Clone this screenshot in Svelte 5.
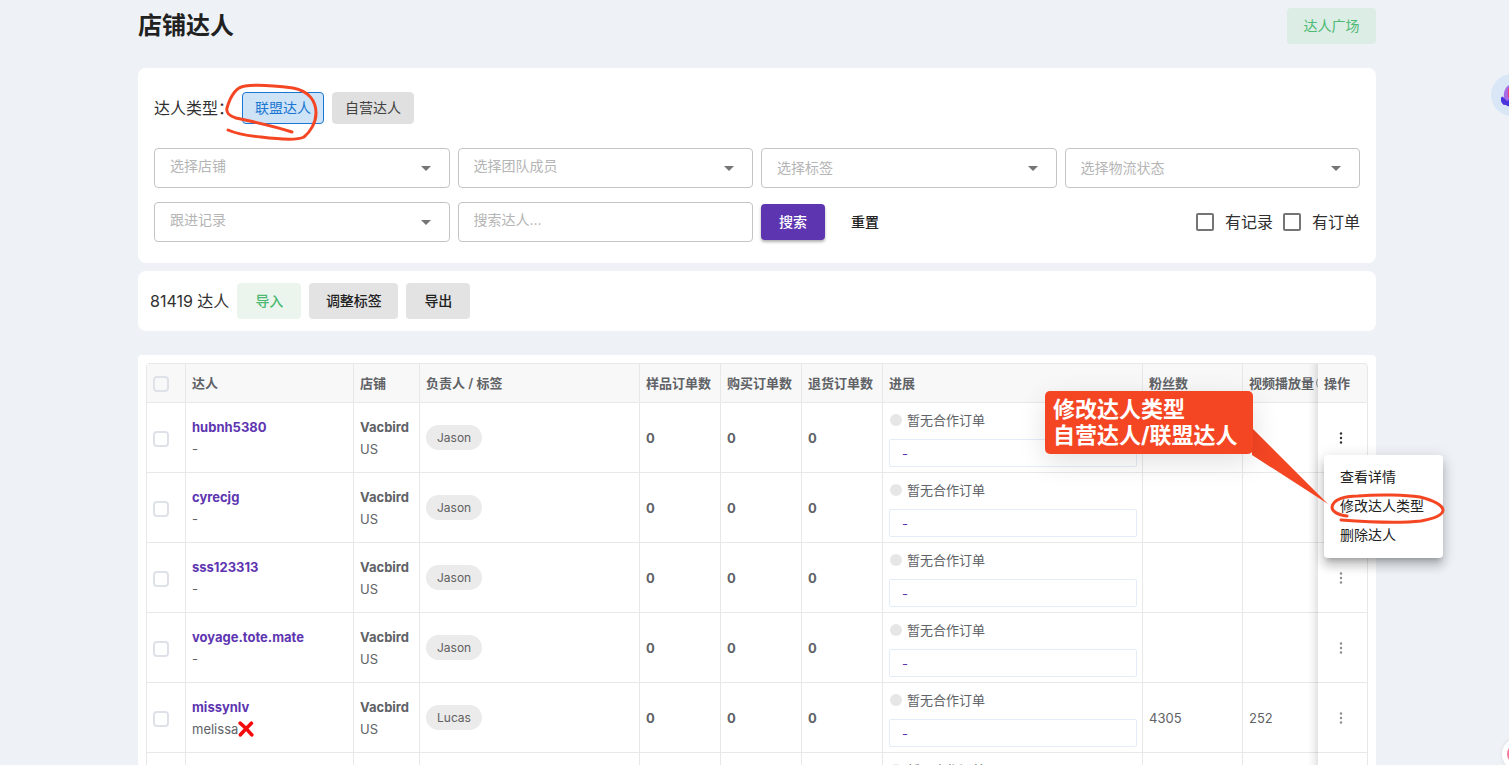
<script>
  const filters = [
    { id: 'shop', label: '选择店铺', raised: true },
    { id: 'member', label: '选择团队成员', raised: true },
    { id: 'tag', label: '选择标签', raised: false },
    { id: 'logistics', label: '选择物流状态', raised: false },
    { id: 'follow', label: '跟进记录', raised: true }
  ];

  const rows = [
    { name: 'hubnh5380', nick: '-', owner: 'Jason', fans: '', views: '', active: true },
    { name: 'cyrecjg', nick: '-', owner: 'Jason', fans: '', views: '' },
    { name: 'sss123313', nick: '-', owner: 'Jason', fans: '', views: '' },
    { name: 'voyage.tote.mate', nick: '-', owner: 'Jason', fans: '', views: '' },
    { name: 'missynlv', nick: 'melissa', cross: true, owner: 'Lucas', fans: '4305', views: '252' },
    { name: '-', nick: '-', owner: '-', fans: '', views: '' }
  ];
</script>

<div class="page">
  <main>
    <header>
      <h1>店铺达人</h1>
      <button class="btn green plaza">达人广场</button>
    </header>

    <section class="card filters">
      <div class="types">
        <span class="types-label">达人类型：</span>
        <button class="type selected">联盟达人</button>
        <button class="type">自营达人</button>
      </div>
      <div class="grid">
        {#each filters as f (f.id)}
          <div class="field">
            <select id={f.id} class:raised={f.raised} aria-label={f.label}>
              <option>{f.label}</option>
            </select>
            <svg class="arrow" viewBox="0 0 10 5" aria-hidden="true"><path d="M0 0h10L5 5z" fill="#757575" /></svg>
          </div>
        {/each}
        <input class="raised" type="text" placeholder="搜索达人..." aria-label="搜索达人" />
        <div class="actions">
          <button class="btn primary">搜索</button>
          <button class="btn plain">重置</button>
          <label class="check first"><input type="checkbox" />有记录</label>
          <label class="check"><input type="checkbox" />有订单</label>
        </div>
      </div>
    </section>

    <section class="card toolbar">
      <span class="total">81419 达人</span>
      <button class="btn green">导入</button>
      <button class="btn grey wide">调整标签</button>
      <button class="btn grey">导出</button>
    </section>

    <section class="card list">
      <table>
        <colgroup>
          <col class="c-check" /><col class="c-name" /><col class="c-shop" /><col />
          <col class="c-num" /><col class="c-num" /><col class="c-num" />
          <col class="c-progress" /><col class="c-fans" /><col class="c-views" /><col class="c-ops" />
        </colgroup>
        <thead>
          <tr>
            <th><input class="tick" type="checkbox" aria-label="全选" /></th>
            <th>达人</th>
            <th>店铺</th>
            <th>负责人 / 标签</th>
            <th>样品订单数</th>
            <th>购买订单数</th>
            <th>退货订单数</th>
            <th>进展</th>
            <th>粉丝数</th>
            <th class="views"><span class="clip">视频播放量<i class="hint"></i></span></th>
            <th class="ops">操作</th>
          </tr>
        </thead>
        <tbody>
          {#each rows as r (r.name)}
            <tr>
              <td><input class="tick" type="checkbox" aria-label={r.name} /></td>
              <td>
                <a href="#{r.name}">{r.name}</a>
                <div class="nick">{r.nick}{#if r.cross}<svg viewBox="0 0 16 16" role="img" aria-label="❌"><path d="M2.2 2.2Q8 7 13.8 13.8M13.4 2.2Q8 7.5 2.4 13.8" fill="none" stroke="#f40b0b" stroke-width="3.6" stroke-linecap="round" /></svg>{/if}</div>
              </td>
              <td><b>Vacbird</b><div>US</div></td>
              <td><span class="chip">{r.owner}</span></td>
              <td><b>0</b></td>
              <td><b>0</b></td>
              <td><b>0</b></td>
              <td class="progress">
                <div class="status"><i class="dot"></i>暂无合作订单</div>
                <div class="note">-</div>
              </td>
              <td>{r.fans}</td>
              <td class="views">{r.views}</td>
              <td class="ops">
                <button class="more" class:active={r.active} aria-label="更多操作">
                  <svg viewBox="0 0 4 14"><circle cx="2" cy="2.5" r="1.2" /><circle cx="2" cy="7" r="1.2" /><circle cx="2" cy="11.5" r="1.2" /></svg>
                </button>
              </td>
            </tr>
          {/each}
        </tbody>
      </table>
    </section>
  </main>

  <div class="menu" role="menu">
    <button role="menuitem">查看详情</button>
    <button role="menuitem">修改达人类型</button>
    <button role="menuitem">删除达人</button>
  </div>

  <!-- Hand-drawn loop around the selected creator type -->
  <svg class="loop-type" viewBox="0 0 100 64" aria-hidden="true">
    <path d="M69 52C51 46 32 42 13 38C6 36 3 32 4 28C8 14 14 7 22 6C34 4 55 6 70 8C86 11 93 21 93 33C93 43 87 52 81 57C73 61 54 59 38 57C26 56 14 54 5 50" />
  </svg>

  <!-- Callout tail pointing at the menu entry -->
  <svg class="tail" viewBox="0 0 80 80" aria-hidden="true">
    <path d="M2 4L78 80L2 31Z" fill="#f54624" />
  </svg>
  <div class="callout">修改达人类型<br />自营达人/联盟达人</div>

  <svg class="loop-menu" viewBox="0 0 118 34" aria-hidden="true">
    <path d="M19 23C9 22 4 18 4 14C5 7 15 3 30 3C52 1 78 2 92 4C104 7 114 11 115 17C115 23 104 26 93 28C75 30 40 29 13 27" />
  </svg>

  <div class="assistant">
    <svg viewBox="0 0 25 42" aria-hidden="true">
      <path d="M13 24C12 17 15 11 21 10V30L12 31Z" fill="#a76be6" />
      <path d="M17 15Q19 12 21 15V25L17 23Z" fill="#f23c6a" />
      <path d="M10 24Q11 21 13 24L16 27L21 24V30Q18 34 15 31Q11 31 10 27Z" fill="#4a35dc" />
    </svg>
  </div>
  <div class="helper"><i></i></div>
</div>

<style>
  :global(body) { background: #eef2f7; }
  .page {
    position: relative;
    overflow: hidden auto;
    scrollbar-width: none;
    height: 100vh;
    font-family: Inter, "Noto Sans CJK SC", sans-serif;
    font-size: 13px;
    line-height: 22px;
    color: #606266;
  }
  .page :is(button, input, select) { font-family: inherit; box-sizing: border-box; margin: 0; }
  main { padding: 8px 133px 0 138px; }
  header { display: flex; justify-content: space-between; align-items: center; height: 36px; margin-bottom: 24px; }
  h1 { margin: 0; font-size: 24px; line-height: 36px; font-weight: 600; color: #212121; }
  .card { background: #fff; border-radius: 8px; }
  .btn {
    height: 36px;
    min-width: 64px;
    padding: 0 16px 2px;
    border: 0;
    border-radius: 4px;
    font-size: 14px;
    font-weight: 500;
    color: #212121;
  }
  .green { background: #ebf5ee; color: #4db972; }
  .plaza { background: #dcede6; min-width: 89px; font-weight: 400; }
  .grey { background: #e3e3e3; }
  .wide { min-width: 89px; }
  .primary { background: #5e35b1; color: #fff; box-shadow: 0 2px 3px #00000050; }
  .plain { background: none; }
  .filters { padding: 24px 16px 21px; }
  .types { display: flex; gap: 8px; height: 32px; align-items: center; margin-bottom: 24px; }
  .types-label { font-size: 16px; color: #303030; }
  .type { height: 32px; width: 82px; padding: 0 0 2px; border: 1px solid #e0e0e0; border-radius: 4px; background: #e0e0e0; color: #424242; font-size: 14px; }
  .selected { background: #cfe3f7; border-color: #1976d2; color: #1976d2; }
  .grid { display: grid; grid-template-columns: repeat(4, 1fr); gap: 14px 8px; }
  .field { position: relative; }
  .grid :is(select, input[type='text']) {
    appearance: none;
    width: 100%;
    height: 40px;
    padding: 0 15px 1px;
    border: 1px solid #c4c4c4;
    border-radius: 4px;
    background: #fff;
    font-size: 14px;
    color: #b5b5b5;
  }
  .grid :is(select, input[type='text']).raised { padding-bottom: 5px; }
  input::placeholder { color: #b5b5b5; opacity: 1; }
  .arrow { position: absolute; right: 19px; top: 18px; width: 10px; height: 5px; }
  .actions { grid-column: span 2; display: flex; align-items: center; gap: 8px; }
  .check { display: flex; align-items: center; gap: 11px; font-size: 16px; color: #303030; }
  .check.first { margin-left: auto; margin-right: 2px; }
  .check input { appearance: none; width: 18px; height: 18px; border: 2px solid #757575; border-radius: 2px; }
  .toolbar { display: flex; align-items: center; gap: 8px; margin-top: 8px; padding: 12px; }
  .total { font-size: 16px; color: #303030; }
  .list { margin-top: 24px; padding: 8px; border-radius: 4px; }
  table {
    width: 100%;
    table-layout: fixed;
    border-collapse: separate;
    border-spacing: 0;
    border: solid #e8e8e8;
    border-width: 1px 0 0 1px;
    border-radius: 4px 4px 0 0;
  }
  .c-check { width: 39px; }
  .c-name { width: 168px; }
  .c-shop { width: 66px; }
  .c-num { width: 81px; }
  .c-progress { width: 260px; }
  .c-fans { width: 100px; }
  .c-views { width: 75px; }
  .c-ops { width: 50px; }
  th, td {
    box-sizing: border-box;
    padding: 0 6px;
    border: solid #e8e8e8;
    border-width: 0 1px 1px 0;
    text-align: left;
    vertical-align: middle;
    white-space: nowrap;
  }
  th { height: 39px; background: #f8f8f8; font-weight: 600; }
  th:last-child { border-top-right-radius: 4px; }
  td { height: 70px; }
  b { font-weight: 700; }
  a { font-weight: 700; color: #5e35b1; text-decoration: none; }
  .views { border-right: 0; padding-right: 0; }
  .clip { display: flex; align-items: center; overflow: hidden; }
  .hint { flex: none; width: 12px; height: 12px; margin-left: 2px; border: 1px solid #909399; border-radius: 50%; }
  .ops { position: relative; }
  .ops::before {
    content: '';
    position: absolute;
    top: 0;
    bottom: -1px;
    left: -10px;
    width: 10px;
    background: linear-gradient(to left, #0000001c, #0000000a 50%, #00000000);
  }
  .tick { display: block; appearance: none; width: 16px; height: 16px; border: 2px solid #dfe1e8; border-radius: 4px; background: transparent; position: relative; top: 1px; }
  .nick { display: flex; align-items: center; }
  .nick svg { width: 16px; height: 16px; }
  .chip { display: inline-block; padding: 0 11px; height: 25px; line-height: 25px; border-radius: 13px; background: #ebebeb; color: #616161; font-size: 12px; }
  .progress { padding-right: 5px; }
  .status { display: flex; align-items: center; gap: 5px; margin-bottom: 8px; }
  .dot { width: 12px; height: 12px; margin-left: 1px; border-radius: 50%; background: #e6e6e6; }
  .note { box-sizing: border-box; height: 28px; padding: 3px 12px; border: 1px solid #e3edf9; border-radius: 2px; color: #5e35b1; }
  td.ops { padding-left: 11px; }
  .more { display: block; padding: 0; width: 24px; height: 24px; border: 0; background: none; fill: #8c8c8c; }
  .more svg { display: block; margin: auto; width: 4px; height: 14px; }
  .active { fill: #303030; }
  .menu {
    position: absolute;
    right: 66px;
    top: 455px;
    width: 119px;
    box-sizing: border-box;
    padding: 6px 0 10px;
    border-radius: 4px;
    background: #fff;
    box-shadow: 0 5px 5px -3px #0003, 0 8px 10px 1px #00000024, 0 3px 14px 2px #0000001f;
  }
  .menu button { display: block; width: 100%; height: 29px; padding: 0 16px; border: 0; background: none; text-align: left; font-size: 14px; color: #212121; }
  .loop-type { position: absolute; left: 223px; top: 80px; width: 100px; height: 64px; }
  .loop-menu { position: absolute; right: 63px; top: 493px; width: 118px; height: 34px; }
  .loop-type path, .loop-menu path { fill: none; stroke: #f54624; stroke-width: 3; stroke-linecap: round; stroke-linejoin: round; }
  .callout {
    position: absolute;
    right: 256px;
    top: 391px;
    width: 208px;
    height: 63px;
    box-sizing: border-box;
    padding: 5px 8px;
    border-radius: 5px;
    background: #f54624;
    box-shadow: 0 8px 28px #0000001f;
    color: #fff;
    font-size: 22px;
    line-height: 26px;
    font-weight: 700;
    white-space: nowrap;
  }
  .tail { position: absolute; right: 179px; top: 424px; width: 80px; height: 80px; }
  .assistant { position: absolute; right: -24px; top: 74px; width: 42px; height: 42px; border-radius: 50%; background: #d8e6f6; }
  .assistant svg { width: 25px; height: 42px; }
  .helper { position: absolute; right: -25px; top: 738px; width: 32px; height: 32px; border-radius: 50%; background: #fff; box-shadow: 0 0 4px #0000001a; }
  .helper i { position: absolute; inset: 5px; border-radius: 50%; background: #f5789a; }
</style>
